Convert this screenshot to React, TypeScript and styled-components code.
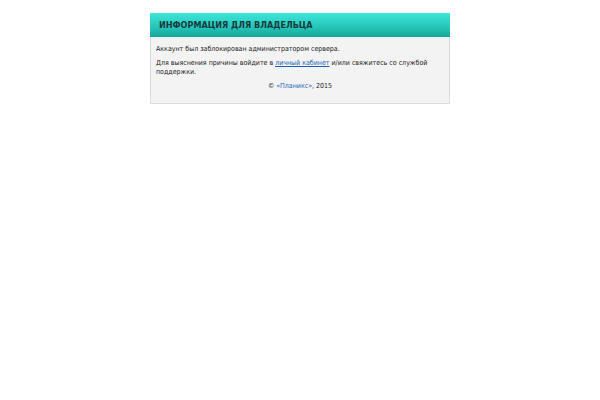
import { createGlobalStyle, styled } from 'styled-components';

const GlobalStyle = createGlobalStyle`
  body {
    margin: 0;
    background: #fff;
    font-family: "DejaVu Sans Condensed", "DejaVu Sans", sans-serif;
  }
`;

const App = () => {
  return (
    <>
      <GlobalStyle />
      <S.page>
        <S.box>
          <S.header>Информация для владельца</S.header>
          <S.body>
            <S.text>Аккаунт был заблокирован администратором сервера.</S.text>
            <S.text>
              Для выяснения причины войдите в <S.link href="#">личный кабинет</S.link> и/или
              свяжитесь со службой поддержки.
            </S.text>
            <S.copyright>
              © <S.plainLink href="#">«Планикс»</S.plainLink>, 2015
            </S.copyright>
          </S.body>
        </S.box>
      </S.page>
    </>
  );
};

export default App;

const S = {
  page: styled.div`
    padding-top: 13px;
    display: flex;
    justify-content: center;
  `,
  box: styled.div`
    width: 300px;
    box-sizing: border-box;
    border: 1px solid #dcdcdc;
    background: #f3f3f3;
  `,
  header: styled.div`
    height: 24px;
    margin: -1px -1px 0;
    padding-left: 9px;
    display: flex;
    align-items: center;
    background: linear-gradient(to bottom, #3ee6da 0%, #25c4b8 60%, #14a899 100%);
    color: #173b3a;
    font-size: 9px;
    font-weight: bold;
    text-transform: uppercase;
  `,
  body: styled.div`
    padding: 8px 5px 13px;
    color: #222;
    font-size: 7px;
    line-height: 8.5px;
  `,
  text: styled.p`
    margin: 0 0 5.5px;
  `,
  link: styled.a`
    color: #1a5fb4;
    text-decoration: underline;
  `,
  plainLink: styled.a`
    color: #1a5fb4;
    text-decoration: none;
  `,
  copyright: styled.p`
    margin: 0;
    text-align: center;
  `,
};
